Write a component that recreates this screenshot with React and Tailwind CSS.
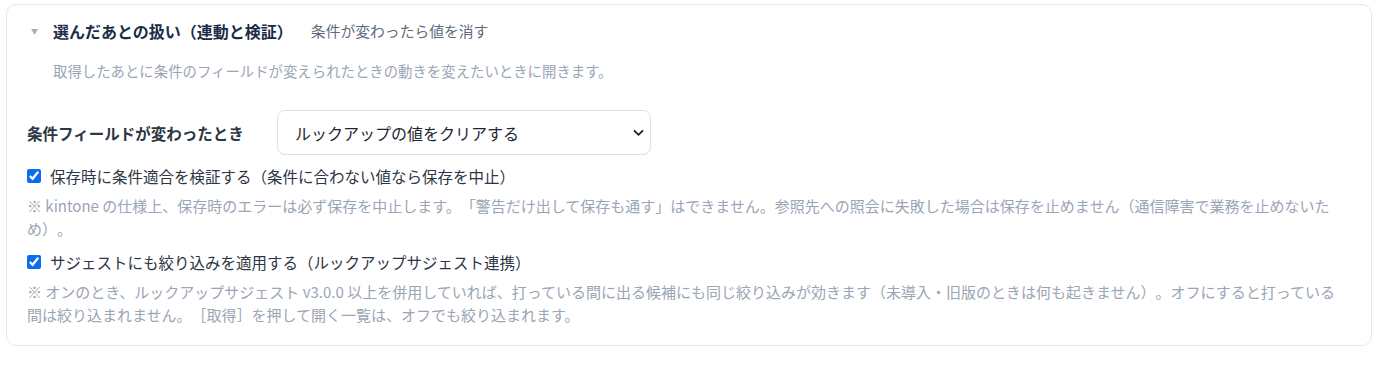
import React from "react";

const font = "font-['Noto_Sans_CJK_JP','Noto_Sans',sans-serif]";

export default function App() {
  return (
    <div className={`${font} [text-spacing-trim:space-all] bg-white min-h-screen pt-[4px] pl-[6px]`}>
      <div className="w-[1366px] border border-[#e3e8ef] rounded-[10px] bg-white px-[20px] pb-[19px]">
        {/* summary */}
        <div className="mt-[15px] h-[22px] flex items-center">
          <span className="w-[26px] text-[7px] text-[#a3adbb] pl-[4px] leading-none">▼</span>
          <span className="text-[16px] font-bold text-[#1c2b48] leading-[22px]">
            選んだあとの扱い（連動と検証）
          </span>
          <span className="ml-[18px] text-[14.8px] text-[#5f6b7c] leading-[22px]">
            条件が変わったら値を消す
          </span>
        </div>
        <div className="mt-[19px] pl-[26px] text-[14.4px] leading-[20px] text-[#9aa5b5]">
          取得したあとに条件のフィールドが変えられたときの動きを変えたいときに開きます。
        </div>

        {/* select row */}
        <div className="mt-[29px] flex items-center">
          <div className="w-[250px] shrink-0 text-[15.5px] font-bold text-[#2d3644] leading-[22px]">
            条件フィールドが変わったとき
          </div>
          <div className="relative w-[374px] h-[45px]">
            <div className="w-full h-full border border-[#d9dfe8] rounded-[8px] bg-white flex items-center pl-[17px] text-[16px] text-[#1f2733]">
              ルックアップの値をクリアする
            </div>
            <svg
              className="absolute right-[7px] top-[19px]"
              width="11"
              height="8"
              viewBox="0 0 11 8"
              fill="none"
            >
              <path d="M1.5 1.8 L5.5 5.8 L9.5 1.8" stroke="#222" strokeWidth="1.8" strokeLinecap="round" strokeLinejoin="round" />
            </svg>
          </div>
        </div>

        {/* checkbox 1 */}
        <label className="mt-[9px] h-[24px] flex items-center">
          <input type="checkbox" defaultChecked className="w-[14px] h-[14px] m-0 accent-[#0b6cf2]" />
          <span className="ml-[9px] text-[15.5px] text-[#2d3644] leading-[24px]">
            保存時に条件適合を検証する（条件に合わない値なら保存を中止）
          </span>
        </label>
        <div className="mt-[6px] text-[15px] leading-[23px] text-[#9aa5b5] whitespace-nowrap">
          ※ kintone の仕様上、保存時のエラーは必ず保存を中止します。「警告だけ出して保存も通す」はできません。参照先への照会に失敗した場合は保存を止めません（通信障害で業務を止めないた
          <br />
          め）。
        </div>

        {/* checkbox 2 */}
        <label className="mt-[10px] h-[24px] flex items-center">
          <input type="checkbox" defaultChecked className="w-[14px] h-[14px] m-0 accent-[#0b6cf2]" />
          <span className="ml-[9px] text-[15.5px] text-[#2d3644] leading-[24px]">
            サジェストにも絞り込みを適用する（ルックアップサジェスト連携）
          </span>
        </label>
        <div className="mt-[6px] text-[15px] leading-[23px] text-[#9aa5b5] whitespace-nowrap">
          ※ オンのとき、ルックアップサジェスト v3.0.0 以上を併用していれば、打っている間に出る候補にも同じ絞り込みが効きます（未導入・旧版のときは何も起きません）。オフにすると打っている
          <br />
          間は絞り込まれません。［取得］を押して開く一覧は、オフでも絞り込まれます。
        </div>
      </div>
    </div>
  );
}
